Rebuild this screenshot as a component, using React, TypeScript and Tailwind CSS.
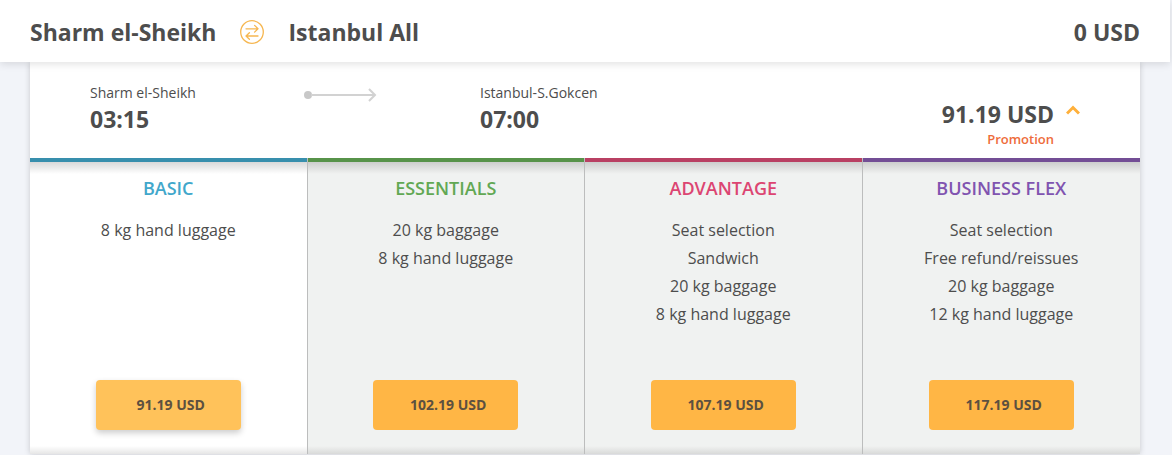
import React from "react";

type Fare = {
  name: string;
  price: string;
  features: string[];
  border: string;
  color: string;
  selected?: boolean;
};

const fares: Fare[] = [
  {
    name: "BASIC",
    price: "91.19 USD",
    features: ["8 kg hand luggage"],
    border: "border-[#388fad]",
    color: "text-[#41a7cb]",
    selected: true,
  },
  {
    name: "ESSENTIALS",
    price: "102.19 USD",
    features: ["20 kg baggage", "8 kg hand luggage"],
    border: "border-[#57934a]",
    color: "text-[#62a854]",
  },
  {
    name: "ADVANTAGE",
    price: "107.19 USD",
    features: ["Seat selection", "Sandwich", "20 kg baggage", "8 kg hand luggage"],
    border: "border-[#b94063]",
    color: "text-[#dc4572]",
  },
  {
    name: "BUSINESS FLEX",
    price: "117.19 USD",
    features: ["Seat selection", "Free refund/reissues", "20 kg baggage", "12 kg hand luggage"],
    border: "border-[#734e95]",
    color: "text-[#8054b0]",
  },
];

const SwapIcon = () => (
  <svg width="24" height="24" viewBox="1 1 24 24" fill="none" stroke="#f6b751" strokeWidth="1.3" strokeLinecap="round" strokeLinejoin="round" aria-hidden="true">
    <circle cx="13" cy="13" r="11.3" />
    <path d="M7 9.8h12M15.6 6.4 19 9.8l-3.4 3.3M19 17H7M10.4 13.7 7 17l3.4 3.3" />
  </svg>
);

const RouteArrow = () => (
  <svg width="74" height="14" viewBox="0 0 74 14" fill="none" stroke="#d2d2d2" strokeWidth="2" aria-hidden="true">
    <circle cx="5" cy="7" r="4" fill="#c8c8c8" stroke="none" />
    <path d="M8 7h64M66 1l6 6-6 6" />
  </svg>
);

const FlightPoint = ({ city, time }: { city: string; time: string }) => (
  <div>
    <p className="text-sm leading-5">{city}</p>
    <p className="text-[23px] leading-8 font-bold">{time}</p>
  </div>
);

const FareColumn = ({ fare, last }: { fare: Fare; last: boolean }) => (
  <section className={"flex flex-1 " + (fare.selected ? "bg-white" : "bg-[#f0f2f1]")}>
    <div className={"flex flex-1 flex-col border-t-4 " + fare.border}>
      <div className="h-3 bg-linear-to-b from-black/15 to-transparent"></div>
      <h2 className={"text-center text-lg leading-7 font-semibold " + fare.color}>{fare.name}</h2>
      <ul className="min-h-[164px] pt-3.5 text-center text-base leading-7">
        {fare.features.map((feature) => (
          <li key={feature}>{feature}</li>
        ))}
      </ul>
      <button
        type="button"
        className={
          "mx-auto mt-3.5 h-[50px] w-[145px] rounded pl-[5px] text-sm font-bold text-[#5c5040] " +
          (fare.selected ? "bg-[#ffc25a] shadow-[0_3px_6px_rgba(0,0,0,0.2)]" : "bg-[#ffb645]")
        }
      >
        {fare.price}
      </button>
      <div className="mt-4 h-2 bg-linear-to-t from-black/10 to-transparent"></div>
    </div>
    {!last && <div className="w-px bg-[#bcbdbd]"></div>}
  </section>
);

export default function App() {
  return (
    <div className="min-h-screen bg-[#f2f4f9] font-['Open_Sans',sans-serif] text-[#4d4d4d]">
      <header className="relative mr-0.5 flex h-[62px] items-center bg-white px-[30px] pt-0.5 text-[23px] font-bold shadow-[0_2px_8px_rgba(0,0,0,0.12)]">
        <h1 className="flex items-center gap-6">
          <span>Sharm el-Sheikh</span>
          <SwapIcon />
          <span>Istanbul All</span>
        </h1>
        <span className="ml-auto">0 USD</span>
      </header>

      <main className="mr-8 ml-[30px] bg-white shadow-[0_0_6px_rgba(0,0,0,0.18)]">
        <div className="flex h-24 items-start px-[60px] pt-[21px]">
          <div className="flex flex-1 items-start">
            <div className="w-[213px]">
              <FlightPoint city="Sharm el-Sheikh" time="03:15" />
            </div>
            <div className="w-[177px] pt-[5px]">
              <RouteArrow />
            </div>
            <FlightPoint city="Istanbul-S.Gokcen" time="07:00" />
          </div>
          <div className="flex gap-3 pt-[15px]">
            <div className="text-right">
              <p className="text-[23px] leading-8 font-bold">91.19 USD</p>
              <p className="text-[13px] leading-[18px] font-semibold text-[#ee6c3b]">Promotion</p>
            </div>
            <button type="button" aria-label="Hide fares" className="flex h-6 items-center">
              <svg width="14" height="10" viewBox="0 0 14 10" fill="none" stroke="#ffb03b" strokeWidth="3">
                <path d="M1 8.5 7 2.5l6 6" />
              </svg>
            </button>
          </div>
        </div>

        <div className="flex">
          {fares.map((fare, index) => (
            <FareColumn key={fare.name} fare={fare} last={index === fares.length - 1} />
          ))}
        </div>
      </main>
    </div>
  );
}
